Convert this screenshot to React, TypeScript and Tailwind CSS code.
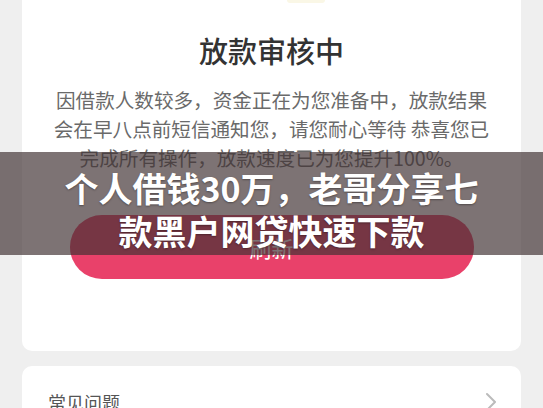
import React from "react";

const cjk = { fontFamily: '"Noto Sans CJK SC", "Noto Sans", sans-serif' };

export default function App() {
  return (
    <div className="relative h-[408px] w-[543px] overflow-hidden bg-[#efefef]" style={cjk}>
      <div className="px-[22px]">
        <div className="flex flex-col items-center rounded-b-[10px] bg-white pb-[72px]">
          <div className="ml-[68px] h-[3px] w-[38px] rounded-b-full bg-[#faf7e6]" />
          <div className="mt-[27px] text-[29px] font-medium leading-[40px] text-[#333333]">放款审核中</div>
          <div className="mt-[15px] text-center text-[19.6px] leading-[29px] text-[#6a6a6a]">
            <div>因借款人数较多，资金正在为您准备中，放款结果</div>
            <div>会在早八点前短信通知您，请您耐心等待 恭喜您已</div>
            <div>完成所有操作，放款速度已为您提升100%。</div>
          </div>
          <button className="mt-[43px] flex h-[64px] w-[404px] items-center justify-center rounded-full bg-[#e9416a] text-[22px] text-white">
            刷新
          </button>
        </div>
        <div className="mt-[15px] flex items-center justify-between rounded-[10px] bg-white pl-[26px] pr-[24px] pt-[24px] pb-[20px]">
          <span className="text-[18px] leading-[24px] text-[#555555]">常见问题</span>
          <svg width="12" height="20" viewBox="0 0 12 20" fill="none" stroke="#bbbbbb" strokeWidth="2" strokeLinecap="round" strokeLinejoin="round">
            <path d="M2 2l8 8-8 8" />
          </svg>
        </div>
      </div>
      <div className="absolute left-0 right-0 top-[152px] flex h-[103px] flex-col items-center justify-start bg-[rgba(64,48,50,0.68)] pt-[14px]">
        <div className="text-[34px] font-bold leading-[43px] text-white [text-shadow:0_1px_2px_rgba(0,0,0,0.35)]">个人借钱30万，老哥分享七</div>
        <div className="text-[34px] font-bold leading-[43px] text-white [text-shadow:0_1px_2px_rgba(0,0,0,0.35)]">款黑户网贷快速下款</div>
      </div>
    </div>
  );
}
